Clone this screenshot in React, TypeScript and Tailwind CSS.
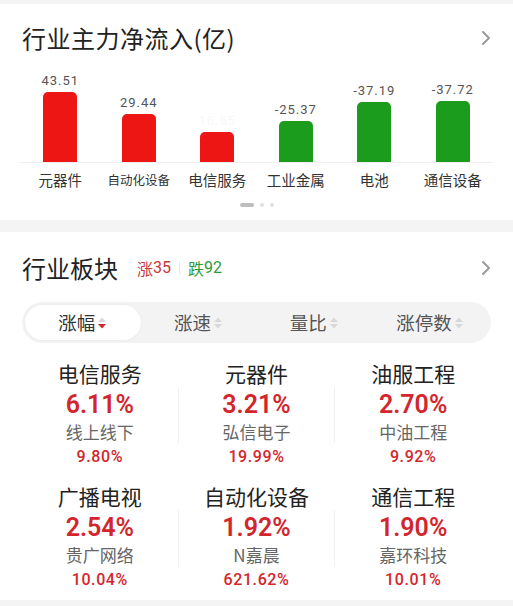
import React from "react";

const CJK = '"Noto Sans CJK SC", "Noto Sans", sans-serif';
const NUM = 'Roboto, "Noto Sans CJK SC", sans-serif';

const bars = [
  { name: "元器件", v: "43.51", h: 70, up: true },
  { name: "自动化设备", v: "29.44", h: 48, up: true },
  { name: "电信服务", v: "16.55", h: 30, up: true, hide: true },
  { name: "工业金属", v: "-25.37", h: 41, up: false },
  { name: "电池", v: "-37.19", h: 60, up: false },
  { name: "通信设备", v: "-37.72", h: 61, up: false },
];

const tabs = ["涨幅", "涨速", "量比", "涨停数"];

const cells = [
  { n: "电信服务", p: "6.11%", s: "线上线下", sp: "9.80%" },
  { n: "元器件", p: "3.21%", s: "弘信电子", sp: "19.99%" },
  { n: "油服工程", p: "2.70%", s: "中油工程", sp: "9.92%" },
  { n: "广播电视", p: "2.54%", s: "贵广网络", sp: "10.04%" },
  { n: "自动化设备", p: "1.92%", s: "N嘉晨", sp: "621.62%" },
  { n: "通信工程", p: "1.90%", s: "嘉环科技", sp: "10.01%" },
];

function Chevron() {
  return (
    <svg width="10" height="16" viewBox="0 0 10 16" className="shrink-0">
      <path d="M2 2 L8 8 L2 14" fill="none" stroke="#9a9a9a" strokeWidth="2" strokeLinecap="round" strokeLinejoin="round" />
    </svg>
  );
}

function Sort({ active }: { active?: boolean }) {
  return (
    <svg width="10" height="16" viewBox="0 0 10 16" className="ml-[2px]">
      <path d="M1 7 L5 2.5 L9 7 Z" fill="#d8d8d8" />
      <path d="M1 9 L5 13.5 L9 9 Z" fill={active ? "#d3262c" : "#d8d8d8"} />
    </svg>
  );
}

function Cell({ c }: { c: (typeof cells)[number] }) {
  return (
    <div className="flex flex-col items-center">
      <div className="h-[30px] flex items-center text-[21px] text-[#222]" style={{ fontFamily: CJK }}>{c.n}</div>
      <div className="h-[32px] flex items-center text-[25px] font-semibold text-[#d3262c]" style={{ fontFamily: NUM }}>{c.p}</div>
      <div className="h-[22px] flex items-center text-[17px] text-[#666]" style={{ fontFamily: CJK }}>{c.s}</div>
      <div className="h-[28px] flex items-center text-[16px] font-medium text-[#d3262c] tracking-[0.6px]" style={{ fontFamily: NUM }}>{c.sp}</div>
    </div>
  );
}

function Divider() {
  return <div className="w-px h-[56px] mt-[28px] bg-[#f0f0f0]" />;
}

export default function App() {
  return (
    <div className="w-[513px] h-[606px] bg-[#f4f4f4] pt-[4px] overflow-hidden" style={{ fontFamily: CJK }}>
      <div className="bg-white h-[216px] flex flex-col">
        <div className="mt-[18px] h-[32px] px-[22px] flex items-center justify-between">
          <div className="text-[24px] text-[#222] leading-[32px] tracking-[0.5px]">行业主力净流入(亿)</div>
          <Chevron />
        </div>
        <div className="mt-[16px] px-[21px]">
          <div className="grid grid-cols-6 h-[92px] items-end">
            {bars.map((b) => (
              <div key={b.name} className="flex flex-col items-center justify-end">
                <div
                  className={`text-[13px] leading-[16px] tracking-[1px] mb-[3px] ${b.hide ? "text-[#f7f7f7]" : "text-[#555]"}`}
                  style={{ fontFamily: NUM }}
                >
                  {b.v}
                </div>
                <div
                  className={`w-[34px] rounded-t-[5px] ${b.up ? "bg-[#ee1515]" : "bg-[#1c9c1c]"}`}
                  style={{ height: b.h }}
                />
              </div>
            ))}
          </div>
          <div className="h-px bg-[#eeeeee] -mx-px" />
          <div className="grid grid-cols-6 mt-[7px]">
            {bars.map((b) => (
              <div
                key={b.name}
                className={`text-center leading-[20px] text-[#333] whitespace-nowrap ${b.name.length > 4 ? "text-[12.5px]" : "text-[14.5px]"}`}
              >
                {b.name}
              </div>
            ))}
          </div>
        </div>
        <div className="mt-[13px] flex justify-center items-center gap-[6px] pl-[1px]">
          <div className="w-[14px] h-[4px] rounded-full bg-[#bdbdbd]" />
          <div className="w-[4px] h-[4px] rounded-full bg-[#e0e0e0]" />
          <div className="w-[4px] h-[4px] rounded-full bg-[#e0e0e0]" />
        </div>
      </div>

      <div className="bg-white mt-[12px] h-[368px] flex flex-col">
        <div className="mt-[20px] h-[32px] px-[22px] flex items-center justify-between">
          <div className="flex items-center">
            <div className="text-[24px] text-[#222] leading-[32px]">行业板块</div>
            <div className="ml-[19px] text-[16px] text-[#c93636] flex items-center">
              涨<span style={{ fontFamily: NUM }}>35</span>
            </div>
            <div className="mx-[8px] w-px h-[12px] bg-[#e6e6e6]" />
            <div className="text-[16px] text-[#2e9a35] flex items-center">
              跌<span style={{ fontFamily: NUM }}>92</span>
            </div>
          </div>
          <Chevron />
        </div>
        <div className="mt-[18px] mx-[22px] h-[41px] rounded-full bg-[#f3f3f3] p-[3px] grid grid-cols-4">
          {tabs.map((t, i) => (
            <div
              key={t}
              className={`flex items-center justify-center rounded-full text-[18.5px] ${i === 0 ? "bg-white text-[#333] shadow-[0_0_3px_rgba(0,0,0,0.06)]" : "text-[#555]"}`}
            >
              {t}
              <Sort active={i === 0} />
            </div>
          ))}
        </div>
        <div className="mt-[16px] px-[22px] flex flex-col gap-[11px]">
          {[0, 1].map((r) => (
            <div key={r} className="grid grid-cols-[1fr_1px_1fr_1px_1fr]">
              <Cell c={cells[r * 3]} />
              <Divider />
              <Cell c={cells[r * 3 + 1]} />
              <Divider />
              <Cell c={cells[r * 3 + 2]} />
            </div>
          ))}
        </div>
      </div>
    </div>
  );
}
